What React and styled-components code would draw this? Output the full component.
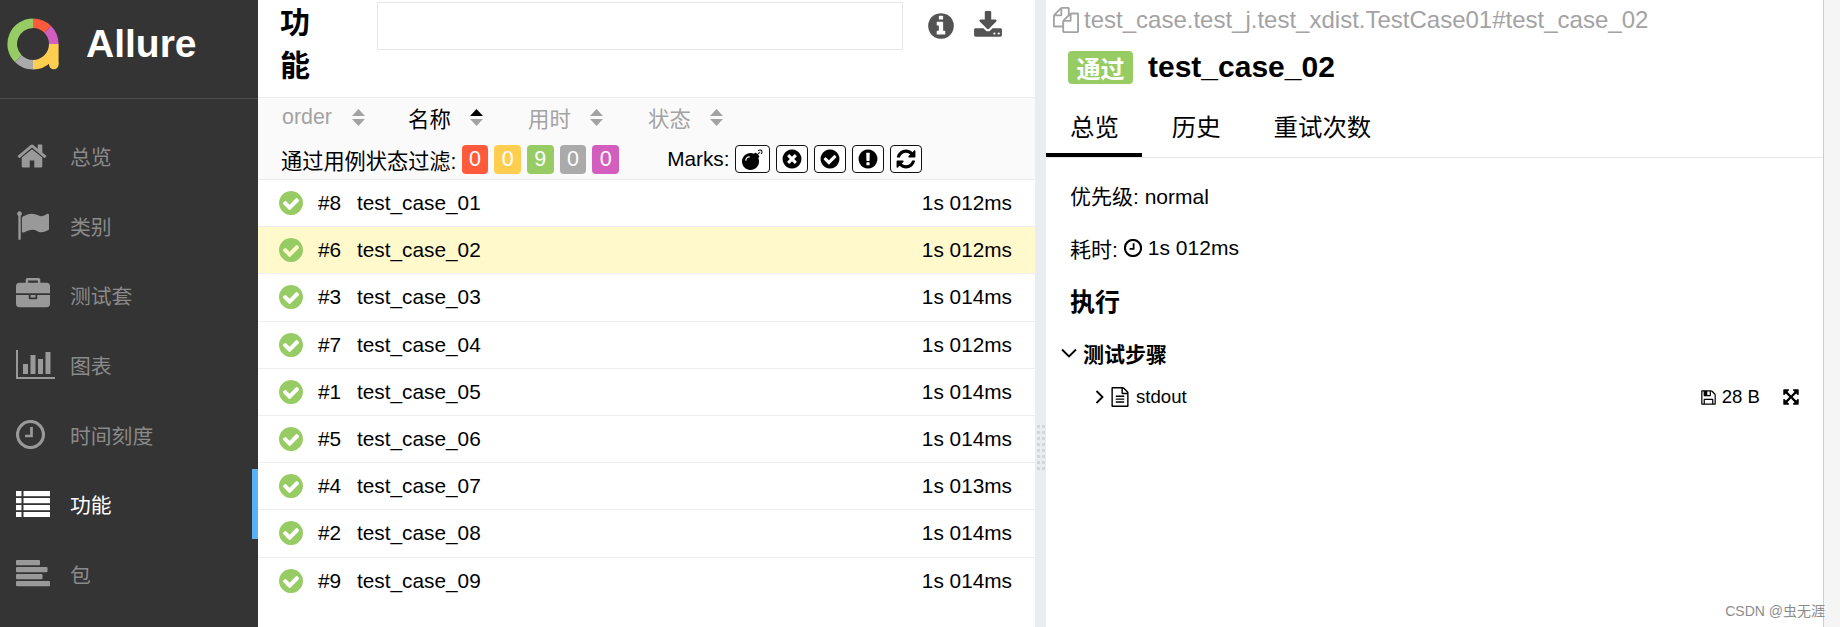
import styled, { createGlobalStyle } from "styled-components";
import { FaBomb } from "react-icons/fa";

const cjk = `"Liberation Sans", "Noto Sans CJK SC", sans-serif`;

const GlobalStyle = createGlobalStyle`
  html, body { margin: 0; padding: 0; height: 100%; overflow: hidden; background: #fff; }
  #root { height: 627px; }
  * { box-sizing: border-box; }
  body { font-family: ${cjk}; font-size: 20.8px; color: #000; }
`;

const Page = styled.div`
  display: flex;
  width: 1840px;
  height: 627px;
  position: relative;
`;

/* ---- side nav ---- */
const SideNav = styled.nav`
  width: 258px;
  flex: none;
  background: #343434;
  display: flex;
  flex-direction: column;
`;
const Brand = styled.div`
  height: 99px;
  flex: none;
  border-bottom: 1px solid #4a4a4a;
  display: flex;
  align-items: center;
  padding-left: 7px;
  padding-bottom: 10px;
`;
const BrandName = styled.span`
  font: bold 39px "Liberation Sans", sans-serif;
  color: #fff;
  margin-left: 27px;
`;
const Menu = styled.div`
  padding-top: 22px;
  display: flex;
  flex-direction: column;
`;
const MenuItem = styled.div`
  height: 69.7px;
  display: flex;
  align-items: center;
  padding-left: 16px;
  color: ${(props) => (props.$active ? "#fff" : "#999")};
  border-right: 6px solid ${(props) => (props.$active ? "#5bb1f5" : "transparent")};
`;
const MenuIcon = styled.span`
  width: 54px;
  flex: none;
  display: flex;
  align-items: center;
`;
const MenuText = styled.span`
  font-size: 20.8px;
  color: ${(props) => (props.$active ? "#fff" : "#8a8a8a")};
`;

/* ---- list panel ---- */
const ListPanel = styled.section`
  width: 777px;
  flex: none;
  display: flex;
  flex-direction: column;
`;
const ListTop = styled.div`
  height: 97px;
  flex: none;
  display: flex;
  padding: 2px 0 0 22px;
`;
const ListTitle = styled.h2`
  width: 97px;
  flex: none;
  margin: -1px 0 0;
  font-size: 30px;
  line-height: 43px;
  font-weight: bold;
  padding: 0 60px 0 0;
`;
const SearchBox = styled.div`
  width: 526px;
  height: 48px;
  flex: none;
  border: 1px solid #e6e6e6;
`;
const TopIcons = styled.div`
  display: flex;
  align-items: flex-start;
  padding: 9px 0 0 23px;
  gap: 17px;
  color: #535353;
`;
const TableHead = styled.div`
  height: 83px;
  flex: none;
  background: #fafafa;
  border-top: 1px solid #ececec;
  border-bottom: 1px solid #ececec;
  padding-left: 24px;
`;
const SortRow = styled.div`
  height: 38px;
  display: flex;
  align-items: center;
`;
const SortCell = styled.div`
  width: ${(props) => props.$w}px;
  flex: none;
  display: flex;
  align-items: center;
  font-size: 21.4px;
  color: ${(props) => (props.$active ? "#000" : "#a3a3a3")};
`;
const SortLabel = styled.span`
  width: ${(props) => props.$w}px;
  flex: none;
`;
const FilterRow = styled.div`
  height: 43px;
  display: flex;
  align-items: center;
  padding-top: 3px;
`;
const Counter = styled.span`
  width: 26.5px;
  height: 29px;
  margin-right: 6.2px;
  border-radius: 4px;
  background: ${(props) => props.$color};
  color: #fff;
  font-size: 21.5px;
  display: flex;
  align-items: center;
  justify-content: center;
`;
const FilterLabel = styled.span`
  margin: 0 5.3px 0 -1px;
  font-size: 21.2px;
  white-space: nowrap;
`;
const MarksLabel = styled.span`
  margin: 0 5px 0 42px;
`;
const MarkButton = styled.span`
  width: ${(props) => props.$w || 32}px;
  height: 28px;
  margin-right: 6px;
  border: 1px solid #111;
  border-radius: 4px;
  background: #fff;
  display: flex;
  align-items: center;
  justify-content: center;
  color: #000;
`;
const Row = styled.div`
  height: 47.2px;
  display: flex;
  align-items: center;
  padding: 0 23px 0 19px;
  background: ${(props) => (props.$selected ? "#fff9cc" : "#fff")};
  border-bottom: 1px solid #eeeeee;
  &:last-child { border-bottom: none; }
`;
const PassMark = styled.span`
  color: #97cc64;
  display: flex;
  flex: none;
`;
const RowOrder = styled.span`
  width: 39px;
  margin-left: 13px;
  flex: none;
`;
const RowName = styled.span`
  flex: 1;
`;

const Gutter = styled.div`
  width: 11px;
  flex: none;
  background: #e9edf0;
  padding: 425px 0 0 1.5px;
`;
const Grip = styled.div`
  display: grid;
  grid-template-columns: 3px 3px;
  grid-auto-rows: 3px;
  column-gap: 2px;
  row-gap: 3px;
`;
const GripDot = styled.i`
  background: #d4d6d8;
`;

/* ---- detail panel ---- */
const Detail = styled.section`
  width: 777px;
  flex: none;
  display: flex;
  flex-direction: column;
`;
const FullName = styled.div`
  height: 42px;
  flex: none;
  padding: 0 0 2px 7px;
  display: flex;
  align-items: center;
  gap: 5px;
  font-size: 24px;
  color: #a3a3a3;
  white-space: nowrap;
`;
const TitleRow = styled.div`
  height: 50px;
  flex: none;
  display: flex;
  align-items: center;
  padding-left: 22px;
  gap: 15px;
`;
const StatusBadge = styled.span`
  width: 65px;
  height: 33px;
  border-radius: 4px;
  background: #97cc64;
  color: #fff;
  font-size: 24px;
  font-weight: bold;
  display: flex;
  align-items: center;
  justify-content: center;
`;
const CaseTitle = styled.h2`
  margin: 0;
  font-size: 30px;
  font-weight: bold;
`;
const Tabs = styled.div`
  height: 66px;
  flex: none;
  display: flex;
  gap: 6px;
  border-bottom: 1px solid #e6e6e6;
`;
const Tab = styled.div`
  height: 65px;
  padding: 5px 23px 0 24px;
  display: flex;
  align-items: center;
  font-size: 24.4px;
  border-bottom: 4px solid ${(props) => (props.$active ? "#000" : "transparent")};
`;
const DetailBody = styled.div`
  padding: 21px 24px 0 24px;
`;
const InfoLine = styled.div`
  height: 31px;
  margin-bottom: 22px;
  display: flex;
  align-items: center;
  gap: 6px;
  font-size: 21px;
`;
const SectionTitle = styled.h3`
  margin: 0 0 17px;
  font-size: 25px;
  line-height: 34px;
  font-weight: bold;
`;
const StepsHead = styled.div`
  height: 34px;
  margin-left: -9px;
  display: flex;
  align-items: center;
  gap: 6px;
  font-weight: bold;
  font-size: 21px;
`;
const Attachment = styled.div`
  height: 34px;
  margin-top: 10px;
  margin-left: 25px;
  display: flex;
  align-items: center;
  font-size: 18.6px;
`;
const FileMark = styled.span`
  display: flex;
  margin-left: 6px;
`;
const AttachName = styled.span`
  flex: 1;
  margin-left: 6px;
`;
const AttachSize = styled.span`
  display: flex;
  align-items: center;
  gap: 5px;
  margin-right: 22px;
`;
const ExpandMark = styled.span`
  display: flex;
  margin-right: -1px;
`;

const SideStrip = styled.div`
  flex: 1;
  background: #f5f5f5;
  border-left: 1px solid #cfcfcf;
`;
const Watermark = styled.div`
  position: absolute;
  right: 15px;
  bottom: 7px;
  font-size: 14px;
  color: #8c8c8c;
  white-space: nowrap;
`;

/* ---- drawings ---- */
const paths = {
  home: "M1472 992v480q0 26-19 45t-45 19h-384v-384h-256v384h-384q-26 0-45-19t-19-45v-480q0-1 .5-3t.5-3l575-474 575 474q1 2 1 6zm223-69l-62 74q-8 9-21 11h-3q-13 0-21-7l-692-577-692 577q-12 8-24 7-13-2-21-11l-62-74q-8-10-7-23.5t11-21.5l719-599q32-26 76-26t76 26l244 204v-195q0-14 9-23t23-9h192q14 0 23 9t9 23v408l219 182q10 8 11 21.5t-7 23.5z",
  flag: "M320 256q0 72-64 110v1266q0 13-9.5 22.5t-22.5 9.5h-64q-13 0-22.5-9.5t-9.5-22.5v-1266q-64-38-64-110 0-53 37.5-90.5t90.5-37.5 90.5 37.5 37.5 90.5zm1472 64v763q0 25-12.5 38.5t-39.5 27.5q-215 116-369 116-61 0-123.5-22t-108.5-48-115.5-48-142.5-22q-192 0-464 146-17 9-33 9-26 0-45-19t-19-45v-742q0-32 31-55 21-14 79-43 236-120 421-120 107 0 200 29t219 88q38 19 88 19 54 0 117.5-21t110-47 88-47 54.5-21q26 0 45 19t19 45z",
  briefcase: "M640 256h512v-128h-512v128zm1152 640v480q0 66-47 113t-113 47h-1472q-66 0-113-47t-47-113v-480h672v160q0 26 19 45t45 19h320q26 0 45-19t19-45v-160h672zm-768 0v128h-256v-128h256zm768-480v384h-1792v-384q0-66 47-113t113-47h352v-160q0-40 28-68t68-28h576q40 0 68 28t28 68v160h352q66 0 113 47t47 113z",
  info: "M1152 1376v-160q0-14-9-23t-23-9h-96v-512q0-14-9-23t-23-9h-320q-14 0-23 9t-9 23v160q0 14 9 23t23 9h96v320h-96q-14 0-23 9t-9 23v160q0 14 9 23t23 9h448q14 0 23-9t9-23zm-128-896v-160q0-14-9-23t-23-9h-192q-14 0-23 9t-9 23v160q0 14 9 23t23 9h192q14 0 23-9t9-23zm640 416q0 209-103 385.5t-279.5 279.5-385.5 103-385.5-103-279.5-279.5-103-385.5 103-385.5 279.5-279.5 385.5-103 385.5 103 279.5 279.5 103 385.5z",
  download: "M1344 1344q0-26-19-45t-45-19-45 19-19 45 19 45 45 19 45-19 19-45zm256 0q0-26-19-45t-45-19-45 19-19 45 19 45 45 19 45-19 19-45zm128-224v320q0 40-28 68t-68 28h-1472q-40 0-68-28t-28-68v-320q0-40 28-68t68-28h465l135 136q58 56 136 56t136-56l136-136h464q40 0 68 28t28 68zm-325-569q17 41-14 70l-448 448q-18 19-45 19t-45-19l-448-448q-31-29-14-70 17-39 59-39h256v-448q0-26 19-45t45-19h256q26 0 45 19t19 45v448h256q42 0 59 39z",
  check: "M1412 734q0-28-18-46l-91-90q-19-19-45-19t-45 19l-408 407-226-226q-19-19-45-19t-45 19l-91 90q-18 18-18 46 0 27 18 45l362 362q19 19 45 19 27 0 46-19l543-543q18-18 18-45zm252 162q0 209-103 385.5t-279.5 279.5-385.5 103-385.5-103-279.5-279.5-103-385.5 103-385.5 279.5-279.5 385.5-103 385.5 103 279.5 279.5 103 385.5z",
  times: "M1277 1122q0-26-19-45l-181-181 181-181q19-19 19-45 0-27-19-46l-90-90q-19-19-46-19-26 0-45 19l-181 181-181-181q-19-19-45-19-27 0-46 19l-90 90q-19 19-19 46 0 26 19 45l181 181-181 181q-19 19-19 45 0 27 19 46l90 90q19 19 46 19 26 0 45-19l181-181 181 181q19 19 45 19 27 0 46-19l90-90q19-19 19-46zm387-226q0 209-103 385.5t-279.5 279.5-385.5 103-385.5-103-279.5-279.5-103-385.5 103-385.5 279.5-279.5 385.5-103 385.5 103 279.5 279.5 103 385.5z",
  exclamation: "M896 128q209 0 385.5 103t279.5 279.5 103 385.5-103 385.5-279.5 279.5-385.5 103-385.5-103-279.5-279.5-103-385.5 103-385.5 279.5-279.5 385.5-103zm128 1247v-190q0-14-9-23.5t-22-9.5h-192q-13 0-23 10t-10 23v190q0 13 10 23t23 10h192q13 0 22-9.5t9-23.5zm-2-344l18-621q0-12-10-18-10-8-24-8h-220q-14 0-24 8-10 6-10 18l17 621q0 10 10 17.5t24 7.5h185q14 0 23.5-7.5t10.5-17.5z",
  refresh: "M1639 1056q0 5-1 7-64 268-268 434.5t-478 166.5q-146 0-282.5-55t-243.5-157l-129 129q-19 19-45 19t-45-19-19-45v-448q0-26 19-45t45-19h448q26 0 45 19t19 45-19 45l-137 137q71 66 161 102t187 36q134 0 250-65t186-179q11-17 53-117 8-23 30-23h192q13 0 22.5 9.5t9.5 22.5zm25-800v448q0 26-19 45t-45 19h-448q-26 0-45-19t-19-45 19-45l138-138q-148-137-349-137-134 0-250 65t-186 179q-11 17-53 117-8 23-30 23h-199q-13 0-22.5-9.5t-9.5-22.5v-7q65-268 270-434.5t480-166.5q146 0 284 55.5t245 156.5l130-129q19-19 45-19t45 19 19 45z",
  files: "M1696 384q40 0 68 28t28 68v1216q0 40-28 68t-68 28h-960q-40 0-68-28t-28-68v-288h-544q-40 0-68-28t-28-68v-672q0-40 20-88t48-76l408-408q28-28 76-48t88-20h416q40 0 68 28t28 68v328q68-40 128-40h416zm-544 213l-299 299h299v-299zm-640-384l-299 299h299v-299zm194 647l316-316v-416h-384v416q0 40-28 68t-68 28h-416v640h512v-256q0-40 20-88t48-76zm956 804v-1152h-384v416q0 40-28 68t-68 28h-416v640h896z",
  file: "M1596 380q28 28 48 76t20 88v1152q0 40-28 68t-68 28h-1344q-40 0-68-28t-28-68v-1600q0-40 28-68t68-28h896q40 0 88 20t76 48zm-444-244v376h376q-10-29-22-41l-313-313q-12-12-41-22zm384 1528v-1024h-416q-40 0-68-28t-28-68v-416h-768v1536h1280zm-1024-864q0-14 9-23t23-9h704q14 0 23 9t9 23v64q0 14-9 23t-23 9h-704q-14 0-23-9t-9-23v-64zm736 224q14 0 23 9t9 23v64q0 14-9 23t-23 9h-704q-14 0-23-9t-9-23v-64q0-14 9-23t23-9h704zm0 256q14 0 23 9t9 23v64q0 14-9 23t-23 9h-704q-14 0-23-9t-9-23v-64q0-14 9-23t23-9h704z",
  save: "M512 1536h768v-384h-768v384zm896 0h128v-896q0-14-10-38.5t-20-34.5l-281-281q-10-10-34-20t-39-10v416q0 40-28 68t-68 28h-576q-40 0-68-28t-28-68v-416h-128v1280h128v-416q0-40 28-68t68-28h832q40 0 68 28t28 68v416zm-384-928v-320q0-13-9.5-22.5t-22.5-9.5h-192q-13 0-22.5 9.5t-9.5 22.5v320q0 13 9.5 22.5t22.5 9.5h192q13 0 22.5-9.5t9.5-22.5zm640 32v928q0 40-28 68t-68 28h-1344q-40 0-68-28t-28-68v-1344q0-40 28-68t68-28h928q40 0 88 20t76 48l280 280q28 28 48 76t20 88z",
  expand: "M1411 541l-355 355 355 355 144-144q29-31 70-14 39 17 39 59v448q0 26-19 45t-45 19h-448q-42 0-59-40-17-39 14-69l144-144-355-355-355 355 144 144q31 30 14 69-17 40-59 40h-448q-26 0-45-19t-19-45v-448q0-42 40-59 39-17 69 14l144 144 355-355-355-355-144 144q-19 19-45 19-12 0-24-5-40-17-40-59v-448q0-26 19-45t45-19h448q42 0 59 40 17 39-14 69l-144 144 355 355 355-355-144-144q-31-30-14-69 17-40 59-40h448q26 0 45 19t19 45v448q0 42-39 59-13 5-25 5-26 0-45-19z",
};

const Fa = ({ name, size }) => (
  <svg width={size} height={size} viewBox="0 0 1792 1792" fill="currentColor">
    <path d={paths[name]} />
  </svg>
);

const Logo = () => (
  <svg width="52" height="52" viewBox="0 0 52 52" fill="none">
    <g strokeWidth="9.6" fill="none">
      <path d="M26 5.2 A20.8 20.8 0 0 1 40.7 11.3" stroke="#ff5a3c" />
      <path d="M40.7 11.3 A20.8 20.8 0 0 1 46.8 26" stroke="#d35ebe" />
      <path d="M46.8 26 V46 M46.8 26 A20.8 20.8 0 0 1 26 46.8" stroke="#ffce50" />
      <path d="M26 46.8 A20.8 20.8 0 0 1 11.3 40.7" stroke="#aaaaaa" />
      <path d="M11.3 40.7 A20.8 20.8 0 0 1 26 5.2" stroke="#97cc64" />
    </g>
    <circle cx="46.8" cy="46.5" r="4.8" fill="#ffce50" />
  </svg>
);

const BarsIcon = () => (
  <svg width="39" height="29" viewBox="0 0 39 29" fill="currentColor">
    <rect x="0" y="0" width="2" height="29" />
    <rect x="0" y="27" width="39" height="2" />
    <rect x="7" y="14" width="5" height="10" />
    <rect x="14.5" y="5" width="5" height="19" />
    <rect x="22" y="9" width="5" height="15" />
    <rect x="29.5" y="2" width="5" height="22" />
  </svg>
);
const ClockIcon = ({ size = 29, weight = 3.2 }) => (
  <svg width={size} height={size} viewBox="0 0 29 29" fill="none" stroke="currentColor">
    <circle cx="14.5" cy="14.5" r={13} strokeWidth={weight} />
    <path d="M15.5 7 V16 H9" strokeWidth={weight * 0.85} />
  </svg>
);
const ListIcon = () => (
  <svg width="34" height="26" viewBox="0 0 34 26" fill="currentColor">
    {[0, 7, 14, 21].map((y) => (
      <g key={y}>
        <rect x="0" y={y} width="5.5" height="5.2" />
        <rect x="7.5" y={y} width="26.5" height="5.2" />
      </g>
    ))}
  </svg>
);
const AlignIcon = () => (
  <svg width="34" height="27" viewBox="0 0 34 27" fill="currentColor">
    <rect x="0" y="0" width="24" height="5.2" rx="1" />
    <rect x="0" y="7" width="31.5" height="5.2" rx="1" />
    <rect x="0" y="14" width="26.5" height="5.2" rx="1" />
    <rect x="0" y="21" width="34" height="5.2" rx="1" />
  </svg>
);
const SortIcon = ({ active }) => (
  <svg width="13" height="17" viewBox="0 0 13 17">
    <path d="M6.5 0 L13 7 H0 Z" fill={active ? "#000" : "#a3a3a3"} />
    <path d="M0 10 H13 L6.5 17 Z" fill="#a3a3a3" />
  </svg>
);
const ChevronDown = () => (
  <svg width="16" height="10" viewBox="0 0 16 10" fill="none" stroke="currentColor" strokeWidth="1.9">
    <path d="M1 1.5 L8 8.5 L15 1.5" />
  </svg>
);
const ChevronRight = () => (
  <svg width="9" height="14" viewBox="0 0 9 14" fill="none" stroke="currentColor" strokeWidth="1.8">
    <path d="M1.5 1 L7.5 7 L1.5 13" />
  </svg>
);

const navItems = [
  { label: "总览", icon: <Fa name="home" size={32} /> },
  { label: "类别", icon: <Fa name="flag" size={33} /> },
  { label: "测试套", icon: <Fa name="briefcase" size={34} /> },
  { label: "图表", icon: <BarsIcon /> },
  { label: "时间刻度", icon: <ClockIcon /> },
  { label: "功能", icon: <ListIcon />, active: true },
  { label: "包", icon: <AlignIcon /> },
];

const sorters = [
  { label: "order", w: 126, lw: 70 },
  { label: "名称", w: 120, lw: 62, active: true },
  { label: "用时", w: 120, lw: 62 },
  { label: "状态", w: 100, lw: 62 },
];

const counters = [
  { color: "#ff5a3c", n: 0 },
  { color: "#ffce50", n: 0 },
  { color: "#97cc64", n: 9 },
  { color: "#aaaaaa", n: 0 },
  { color: "#d35ebe", n: 0 },
];

const rows = [
  ["#8", "test_case_01", "1s 012ms"],
  ["#6", "test_case_02", "1s 012ms"],
  ["#3", "test_case_03", "1s 014ms"],
  ["#7", "test_case_04", "1s 012ms"],
  ["#1", "test_case_05", "1s 014ms"],
  ["#5", "test_case_06", "1s 014ms"],
  ["#4", "test_case_07", "1s 013ms"],
  ["#2", "test_case_08", "1s 014ms"],
  ["#9", "test_case_09", "1s 014ms"],
];

export default function App() {
  return (
    <Page>
      <GlobalStyle />
      <SideNav>
        <Brand>
          <Logo />
          <BrandName>Allure</BrandName>
        </Brand>
        <Menu>
          {navItems.map((item) => (
            <MenuItem key={item.label} $active={item.active}>
              <MenuIcon>{item.icon}</MenuIcon>
              <MenuText $active={item.active}>{item.label}</MenuText>
            </MenuItem>
          ))}
        </Menu>
      </SideNav>

      <ListPanel>
        <ListTop>
          <ListTitle>功能</ListTitle>
          <SearchBox />
          <TopIcons>
            <Fa name="info" size={30} />
            <Fa name="download" size={30} />
          </TopIcons>
        </ListTop>
        <TableHead>
          <SortRow>
            {sorters.map((s) => (
              <SortCell key={s.label} $w={s.w} $active={s.active}>
                <SortLabel $w={s.lw}>{s.label}</SortLabel>
                <SortIcon active={s.active} />
              </SortCell>
            ))}
          </SortRow>
          <FilterRow>
            <FilterLabel>通过用例状态过滤:</FilterLabel>
            {counters.map((c, i) => (
              <Counter key={i} $color={c.color}>{c.n}</Counter>
            ))}
            <MarksLabel>Marks:</MarksLabel>
            <MarkButton $w={35}><FaBomb size={21} /></MarkButton>
            <MarkButton><Fa name="times" size={22} /></MarkButton>
            <MarkButton><Fa name="check" size={22} /></MarkButton>
            <MarkButton><Fa name="exclamation" size={22} /></MarkButton>
            <MarkButton><Fa name="refresh" size={22} /></MarkButton>
          </FilterRow>
        </TableHead>
        <div>
          {rows.map((r) => (
            <Row key={r[0]} $selected={r[1] === "test_case_02"}>
              <PassMark><Fa name="check" size={28} /></PassMark>
              <RowOrder>{r[0]}</RowOrder>
              <RowName>{r[1]}</RowName>
              <span>{r[2]}</span>
            </Row>
          ))}
        </div>
      </ListPanel>

      <Gutter>
        <Grip>
          {Array.from({ length: 16 }, (_, i) => <GripDot key={i} />)}
        </Grip>
      </Gutter>

      <Detail>
        <FullName>
          <Fa name="files" size={26} />
          test_case.test_j.test_xdist.TestCase01#test_case_02
        </FullName>
        <TitleRow>
          <StatusBadge>通过</StatusBadge>
          <CaseTitle>test_case_02</CaseTitle>
        </TitleRow>
        <Tabs>
          <Tab $active>总览</Tab>
          <Tab>历史</Tab>
          <Tab>重试次数</Tab>
        </Tabs>
        <DetailBody>
          <InfoLine>优先级: normal</InfoLine>
          <InfoLine>
            耗时: <ClockIcon size={18} weight={3.4} /> 1s 012ms
          </InfoLine>
          <SectionTitle>执行</SectionTitle>
          <StepsHead>
            <ChevronDown />
            测试步骤
          </StepsHead>
          <Attachment>
            <ChevronRight />
            <FileMark><Fa name="file" size={20} /></FileMark>
            <AttachName>stdout</AttachName>
            <AttachSize>
              <Fa name="save" size={17} />
              28 B
            </AttachSize>
            <ExpandMark><Fa name="expand" size={18} /></ExpandMark>
          </Attachment>
        </DetailBody>
      </Detail>

      <SideStrip />
      <Watermark>CSDN @虫无涯</Watermark>
    </Page>
  );
}
